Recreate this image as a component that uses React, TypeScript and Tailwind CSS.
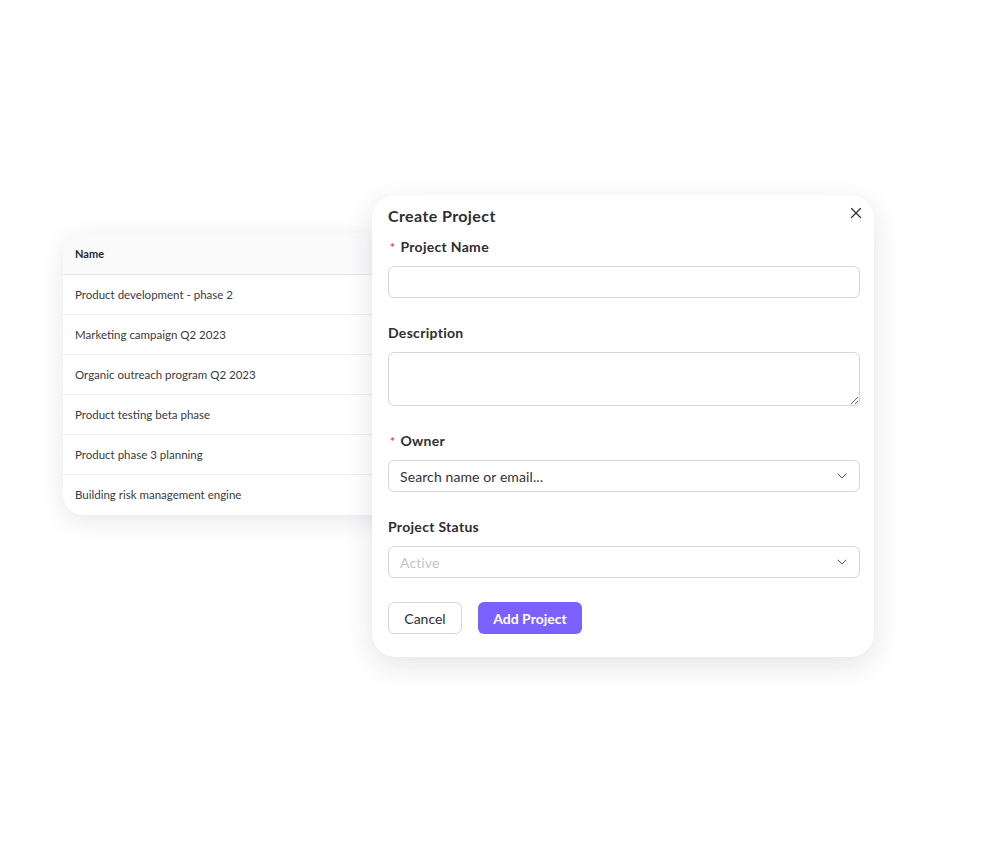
import { X, ChevronDown } from "lucide-react";

const projects = [
  "Product development - phase 2",
  "Marketing campaign Q2 2023",
  "Organic outreach program Q2 2023",
  "Product testing beta phase",
  "Product phase 3 planning",
  "Building risk management engine",
];

function ProjectTable() {
  return (
    <div className="mt-[38px] w-[340px] shrink-0 overflow-hidden rounded-[20px] bg-white shadow-[0_6px_24px_rgba(30,30,60,0.10)]">
      <div className="flex h-[42px] items-center border-b border-[#e6e6ea] bg-[#fafafb] px-3 pt-[2px] text-[11px] font-bold text-[#2b2b2f]">
        Name
      </div>
      {projects.map((p, i) => (
        <div
          key={p}
          className={
            "flex h-[40px] items-center px-3 text-[11.5px] text-[#3a3a3f] " +
            (i < projects.length - 1 ? "border-b border-[#efeff2]" : "")
          }
        >
          {p}
        </div>
      ))}
    </div>
  );
}

function Label({ text, required }: { text: string; required?: boolean }) {
  return (
    <div className="flex h-5 items-center text-[14px] font-bold tracking-[0.3px] text-[#2e2e33]">
      {required && (
        <span className="ml-[2px] mr-[5px] mt-[4px] text-[12px] leading-none text-[#e5484d]">*</span>
      )}
      {text}
    </div>
  );
}

function Select({ placeholder, muted }: { placeholder: string; muted?: boolean }) {
  return (
    <div className="mt-[10px] flex h-8 items-center justify-between rounded-[6px] border border-[#d6d6dc] bg-white pl-[11px] pr-[9px]">
      <span className={"text-[14px] tracking-[0.1px] " + (muted ? "text-[#c4c4ca]" : "text-[#333338]")}>
        {placeholder}
      </span>
      <ChevronDown className="h-4 w-4 text-[#555]" strokeWidth={1.5} />
    </div>
  );
}

function CreateProjectModal() {
  return (
    <div className="relative z-10 -ml-[31px] w-[502px] shrink-0 rounded-[24px] bg-white pb-[23px] pl-4 pr-[14px] pt-[11px] shadow-[0_8px_28px_rgba(30,30,60,0.12)]">
      <button type="button" className="absolute right-[9px] top-[9px] text-[#333]">
        <X className="h-[18px] w-[18px]" strokeWidth={1.6} />
      </button>
      <h2 className="h-5 text-[16px] font-bold leading-5 tracking-[0.4px] text-[#2e2e33]">Create Project</h2>

      <div className="mt-[10px]">
        <Label text="Project Name" required />
        <div className="mt-[10px] h-8 rounded-[6px] border border-[#d6d6dc]" />
      </div>

      <div className="mt-[24px]">
        <Label text="Description" />
        <textarea className="mt-[10px] block h-[54px] w-full rounded-[6px] border border-[#d6d6dc] outline-none" />
      </div>

      <div className="mt-[24px]">
        <Label text="Owner" required />
        <Select placeholder="Search name or email..." />
      </div>

      <div className="mt-[24px]">
        <Label text="Project Status" />
        <Select placeholder="Active" muted />
      </div>

      <div className="mt-6 flex gap-4">
        <button
          type="button"
          className="h-8 w-[74px] rounded-[6px] border border-[#d6d6dc] bg-white text-[14px] text-[#2e2e33]"
        >
          Cancel
        </button>
        <button
          type="button"
          className="h-8 w-[104px] rounded-[6px] bg-[#7b61ff] text-[14px] font-bold text-white"
        >
          Add Project
        </button>
      </div>
    </div>
  );
}

export default function App() {
  return (
    <div className="min-h-[847px] w-[1000px] bg-white font-['Lato',sans-serif]">
      <div className="flex items-start pl-[63px] pt-[195px]">
        <ProjectTable />
        <CreateProjectModal />
      </div>
    </div>
  );
}
